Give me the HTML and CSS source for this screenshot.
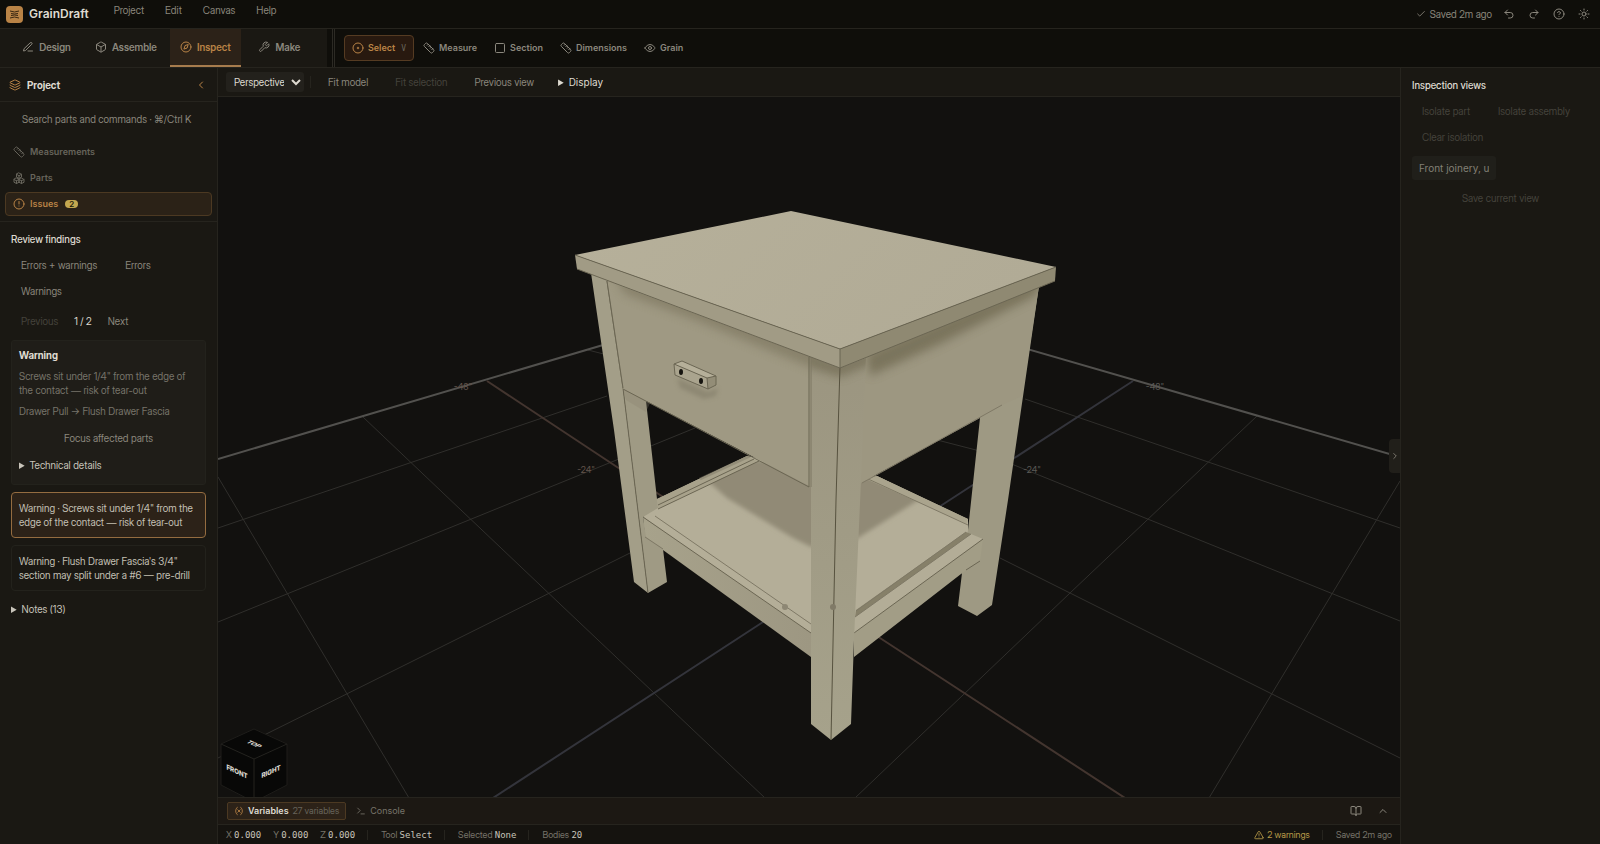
FILE: index.html
```html
<!DOCTYPE html>
<html lang="en">
<head>
<meta charset="utf-8">
<title>GrainDraft</title>
<link rel="stylesheet" href="styles.css">
</head>
<body>
<svg class="sprite" aria-hidden="true">
  <symbol id="i-pen" viewBox="0 0 24 24"><path d="M12 20h9M16.5 3.5a2.1 2.1 0 0 1 3 3L7 19l-4 1 1-4z"/></symbol>
  <symbol id="i-box" viewBox="0 0 24 24"><path d="M21 8v8a2 2 0 0 1-1 1.7l-7 4a2 2 0 0 1-2 0l-7-4A2 2 0 0 1 3 16V8a2 2 0 0 1 1-1.7l7-4a2 2 0 0 1 2 0l7 4A2 2 0 0 1 21 8zM3.3 7L12 12l8.700-5M12 22V12"/></symbol>
  <symbol id="i-compass" viewBox="0 0 24 24"><circle cx="12" cy="12" r="10"/><path d="M16.200 7.800l-2.100 6.300-6.300 2.100 2.100-6.300z"/></symbol>
  <symbol id="i-wrench" viewBox="0 0 24 24"><path d="M14.700 6.300a1 1 0 0 0 0 1.400l1.600 1.600a1 1 0 0 0 1.400 0l3.800-3.800a6 6 0 0 1-7.900 7.900l-6.900 6.900a2.100 2.100 0 0 1-3-3l6.900-6.900a6 6 0 0 1 7.900-7.900z"/></symbol>
  <symbol id="i-target" viewBox="0 0 24 24"><circle cx="12" cy="12" r="10"/><path d="M12 10.500v3M10.500 12h3"/></symbol>
  <symbol id="i-ruler" viewBox="0 0 24 24"><path d="M21.300 15.300a2.400 2.400 0 0 1 0 3.400l-2.600 2.600a2.400 2.400 0 0 1-3.400 0L2.700 8.700a2.400 2.400 0 0 1 0-3.400l2.600-2.600a2.400 2.400 0 0 1 3.400 0zM14.500 12.500l2-2M11.500 9.500l2-2M8.500 6.500l2-2M17.500 15.500l2-2"/></symbol>
  <symbol id="i-square" viewBox="0 0 24 24"><rect x="3" y="3" width="18" height="18" rx="2"/></symbol>
  <symbol id="i-eye" viewBox="0 0 24 24"><path d="M2 12s3.500-7 10-7 10 7 10 7-3.500 7-10 7S2 12 2 12z"/><circle cx="12" cy="12" r="3"/></symbol>
  <symbol id="i-check" viewBox="0 0 24 24"><path d="M20 6L9 17l-5-5"/></symbol>
  <symbol id="i-undo" viewBox="0 0 24 24"><path d="M9 14L4 9l5-5M4 9h10.500a5.500 5.500 0 0 1 0 11H11"/></symbol>
  <symbol id="i-redo" viewBox="0 0 24 24"><path d="M15 14l5-5-5-5M20 9H9.500a5.500 5.500 0 0 0 0 11H13"/></symbol>
  <symbol id="i-help" viewBox="0 0 24 24"><circle cx="12" cy="12" r="10"/><path d="M9.100 9a3 3 0 0 1 5.800 1c0 2-3 3-3 3M12 17h.01"/></symbol>
  <symbol id="i-sun" viewBox="0 0 24 24"><circle cx="12" cy="12" r="4"/><path d="M12 2v2M12 20v2M4.900 4.900l1.400 1.400M17.700 17.700l1.400 1.400M2 12h2M20 12h2M6.300 17.700l-1.400 1.400M19.100 4.900l-1.400 1.400"/></symbol>
  <symbol id="i-layers" viewBox="0 0 24 24"><path d="M12.800 2.200a2 2 0 0 0-1.600 0L2.600 6.100a1 1 0 0 0 0 1.800l8.600 3.900a2 2 0 0 0 1.600 0l8.600-3.900a1 1 0 0 0 0-1.800zM2 12a1 1 0 0 0 .6.900l8.600 3.900a2 2 0 0 0 1.600 0l8.600-3.900A1 1 0 0 0 22 12M2 17a1 1 0 0 0 .6.900l8.600 3.900a2 2 0 0 0 1.600 0l8.600-3.900A1 1 0 0 0 22 17"/></symbol>
  <symbol id="i-left" viewBox="0 0 24 24"><path d="M15 18l-6-6 6-6"/></symbol>
  <symbol id="i-right" viewBox="0 0 24 24"><path d="M9 18l6-6-6-6"/></symbol>
  <symbol id="i-up" viewBox="0 0 24 24"><path d="M18 15l-6-6-6 6"/></symbol>
  <symbol id="i-boxes" viewBox="0 0 24 24"><path d="M7 12l5 3v5.500L7 23l-5-2.500V15zM17 12l5 3v5.500L17 23l-5-2.500V15zM12 2l5 2.500V10l-5 3-5-3V4.500zM7 17.500l5-2.500M7 17.500L2 15M7 17.500V23M17 17.500l5-2.500M17 17.500L12 15M17 17.500V23M12 7.500l5-3M12 7.500l-5-3M12 7.500V13"/></symbol>
  <symbol id="i-alert" viewBox="0 0 24 24"><circle cx="12" cy="12" r="10"/><path d="M12 7v5M12 16h.01"/></symbol>
  <symbol id="i-warn" viewBox="0 0 24 24"><path d="M21.700 18l-8-14a2 2 0 0 0-3.400 0l-8 14A2 2 0 0 0 4 21h16a2 2 0 0 0 1.700-3zM12 9v4M12 17h.01"/></symbol>
  <symbol id="i-var" viewBox="0 0 24 24"><path d="M8 21s-4-3-4-9 4-9 4-9M16 3s4 3 4 9-4 9-4 9M15 9l-6 6M9 9l6 6"/></symbol>
  <symbol id="i-term" viewBox="0 0 24 24"><path d="M4 17l6-6-6-6M12 19h8"/></symbol>
  <symbol id="i-book" viewBox="0 0 24 24"><path d="M12 7v14M3 18a1 1 0 0 1-1-1V4a1 1 0 0 1 1-1h5a4 4 0 0 1 4 4 4 4 0 0 1 4-4h5a1 1 0 0 1 1 1v13a1 1 0 0 1-1 1h-6a3 3 0 0 0-3 3 3 3 0 0 0-3-3z"/></symbol>
</svg>

<div class="app">
  <header class="titlebar">
    <div class="brand">
      <svg class="logo" viewBox="0 0 17 17"><rect width="17" height="17" rx="4" fill="#b98346"/><path d="M4 5q4.500 2 9 0M5 7.500q3.500 1 7 0M5 9.500q3.500-1 7 0M4 12q4.500-2 9 0" fill="none" stroke="#3a2712" stroke-width="1"/></svg>
      <span>GrainDraft</span>
    </div>
    <nav class="menu" aria-label="Main menu">
      <button>Project</button><button>Edit</button><button>Canvas</button><button>Help</button>
    </nav>
    <div class="title-actions">
      <span class="saved"><svg class="icon"><use href="#i-check"/></svg>Saved 2m ago</span>
      <button aria-label="Undo"><svg class="icon md"><use href="#i-undo"/></svg></button>
      <button aria-label="Redo"><svg class="icon md"><use href="#i-redo"/></svg></button>
      <button aria-label="Help"><svg class="icon md"><use href="#i-help"/></svg></button>
      <button aria-label="Theme"><svg class="icon md"><use href="#i-sun"/></svg></button>
    </div>
  </header>

  <div class="modebar">
    <nav class="tabs" aria-label="Workspaces">
      <button class="tab"><svg class="icon md"><use href="#i-pen"/></svg>Design</button>
      <button class="tab"><svg class="icon md"><use href="#i-box"/></svg>Assemble</button>
      <button class="tab active"><svg class="icon md"><use href="#i-compass"/></svg>Inspect</button>
      <button class="tab"><svg class="icon md"><use href="#i-wrench"/></svg>Make</button>
    </nav>
    <div class="tools" role="toolbar" aria-label="Tools">
      <button class="tool active"><svg class="icon md"><use href="#i-target"/></svg>Select<kbd>V</kbd></button>
      <button class="tool"><svg class="icon md"><use href="#i-ruler"/></svg>Measure</button>
      <button class="tool"><svg class="icon md"><use href="#i-square"/></svg>Section</button>
      <button class="tool"><svg class="icon md"><use href="#i-ruler"/></svg>Dimensions</button>
      <button class="tool"><svg class="icon md"><use href="#i-eye"/></svg>Grain</button>
    </div>
  </div>

  <div class="work">
    <aside class="sidebar">
      <header class="side-head">
        <svg class="icon md accent"><use href="#i-layers"/></svg>
        <h2>Project</h2>
        <button aria-label="Collapse panel" class="accent"><svg class="icon md"><use href="#i-left"/></svg></button>
      </header>
      <div class="side-nav">
        <button class="search">Search parts and commands · ⌘/Ctrl K</button>
        <button class="nav-item"><svg class="icon md"><use href="#i-ruler"/></svg>Measurements</button>
        <button class="nav-item"><svg class="icon md"><use href="#i-boxes"/></svg>Parts</button>
        <button class="nav-item active"><svg class="icon md"><use href="#i-alert"/></svg>Issues<span class="badge">2</span></button>
      </div>
      <section class="findings">
        <h3>Review findings</h3>
        <div class="chips">
          <button class="btn">Errors + warnings</button>
          <button class="btn">Errors</button>
          <button class="btn">Warnings</button>
        </div>
        <div class="pager">
          <button class="btn" disabled>Previous</button>
          <span>1 / 2</span>
          <button class="btn">Next</button>
        </div>
        <article class="card">
          <h4>Warning</h4>
          <p>Screws sit under 1/4" from the edge of the contact — risk of tear-out</p>
          <p>Drawer Pull → Flush Drawer Fascia</p>
          <button class="btn">Focus affected parts</button>
          <details><summary>Technical details</summary></details>
        </article>
        <button class="finding selected">Warning · Screws sit under 1/4" from the edge of the contact — risk of tear-out</button>
        <button class="finding">Warning · Flush Drawer Fascia's 3/4" section may split under a #6 — pre-drill</button>
        <details class="notes"><summary>Notes (13)</summary></details>
      </section>
    </aside>

    <main class="center">
      <div class="viewbar">
        <select aria-label="Projection"><option>Perspective</option></select>
        <span class="sep"></span>
        <button class="btn">Fit model</button>
        <button class="btn" disabled>Fit selection</button>
        <button class="btn">Previous view</button>
        <details><summary>Display</summary></details>
      </div>

      <div class="canvas">
        <svg class="scene" viewBox="218 97 1182 700" preserveAspectRatio="xMidYMid slice" role="img" aria-label="Nightstand model">
          <defs>
            <filter id="soft" x="-20%" y="-50%" width="140%" height="200%"><feGaussianBlur stdDeviation="5"/></filter>
            <filter id="soft2" x="-20%" y="-20%" width="140%" height="140%"><feGaussianBlur stdDeviation="2"/></filter>
            <linearGradient id="legG" x1="0" y1="0" x2="0" y2="1"><stop offset="0" stop-color="#9b9580"/><stop offset="1" stop-color="#a6a28b"/></linearGradient>
            <linearGradient id="topG" x1="0" y1="0" x2="1" y2="0.300"><stop offset="0" stop-color="#b6b09a"/><stop offset="1" stop-color="#b1ab96"/></linearGradient>
            <linearGradient id="sideG" x1="0" y1="0" x2="1" y2="0"><stop offset="0" stop-color="#a7a28b"/><stop offset="1" stop-color="#9d9782"/></linearGradient>
            <clipPath id="cDrawer"><path d="M607 281L811 357V487L623 389z"/></clipPath>
            <clipPath id="cRight"><path d="M840 366L1039 286L1022 396L862 483L840 470z"/></clipPath>
            <clipPath id="cShelf"><path d="M643 517L658 508L758 461L877 476L968 521V532L856 611L811 633z"/></clipPath>
            <clipPath id="cLeg"><path d="M811 357L840 368L866 358L851 724L831 740L811 724z"/></clipPath>
          </defs>
          <g class="grid">
            <path d="M218 477L409 798M363 417L560 604L765 798M588 350L976 450M976 450L1014 465L1400 621M1025 399L1400 528M1000 558L1400 758"/>
            <path d="M218 528L607 396M218 622L560 483L695 428M218 758L630 553M1400 481L1209 798M1257 416L1070 593L855 798"/>
          </g>
          <path class="horizon" d="M218 459L620 340M1010 344L1400 457"/>
          <path class="axis-x" d="M487 381L617 467L880 638L1125 798"/>
          <path class="axis-y" d="M1133 381L942 505L763 622L493 798"/>
          <g class="marks" text-anchor="middle">
            <text x="463" y="390" class="warm">-48"</text><text x="586" y="473" class="warm">-24"</text>
            <text x="1155" y="390">-48"</text><text x="1032" y="473">-24"</text>
          </g>

          <path d="M657 499L747 456L830 470L877 476L968 519V536L983 539L854 640H811L643 517z" fill="#b4ae98"/>
          <g clip-path="url(#cShelf)"><path d="M700 474L727 498L760 518L793 538L811 547L858 538L920 499L900 460H740z" fill="#918a76" filter="url(#soft2)"/></g>
          <path d="M657 499L747 456L758 461L658 509z" fill="#a8a28b"/>
          <path d="M658 505L754 459M658 509L759 461" class="edge"/>
          <path d="M700 479L750 456" stroke="#827c69" stroke-width="3" opacity=".5"/>
          <path d="M866 479L877 476L968 519L967 524z" fill="#aaa48d"/>
          <path d="M866 478L968 525" class="edge faint"/>
          <path d="M655 516L811 624" class="edge faint"/>
          <path d="M643 517L811 633V657L645 537z" fill="url(#sideG)"/>
          <path d="M643 517L811 633" class="edge"/>

          <path d="M591 273L607 280L623 388L648 593L634 582L614 430z" fill="#a39e88"/>
          <path d="M607 280L620 285L646 401L658 508L643 517L646 537L663 549L667 582L648 593L623 388z" fill="#9f9a84"/>
          <path d="M607 281L623 388L648 593" class="edge"/>
          <path d="M645 537L663 549" class="edge faint"/>
          <path d="M1039 286L1008 500L992 605L977 616L958 606L962 573L968 530L980 418L990 380z" fill="#9e9983"/>
          <path d="M854 633L983 539L980 561L961 574L854 657z" fill="#a29d86"/>
          <path d="M971 534L983 539L854 633L855 617z" fill="#b3ad97"/>
          <path d="M966 532L971 534L855 617L856 610z" fill="#868069"/>
          <path d="M966 532L856 611M971 534L855 617" class="edge faint"/>
          <path d="M854 633L983 539M980 561L966 570" class="edge"/>

          <path d="M607 280L811 356V487L623 389z" fill="#9f9983"/>
          <path d="M623 389L650 403L646 412L626 400z" fill="#88826d" opacity=".3"/>
          <path d="M840 366L1039 286L1022 396L1002 405L980 418L861 483z" fill="#9d9781"/>
          <g clip-path="url(#cDrawer)"><path d="M612 272L830 352V375L770 351L700 322L625 294z" fill="#7d765f" opacity=".65" filter="url(#soft)"/></g>
          <g clip-path="url(#cRight)"><path d="M866 354L1045 276L1035 296L940 344L870 376z" fill="#6f6951" opacity=".75" filter="url(#soft)"/></g>
          <path d="M623 389L809 487V357M607 281L623 388" class="edge"/>
          <path d="M862 483L1002 405" class="edge faint"/>
          <path d="M811 355L840 366L866 357L861 480L854 640L851 724L831 740L811 724z" fill="url(#legG)"/>
          <g clip-path="url(#cLeg)"><path d="M805 350L840 363L872 350V364L840 377L805 366z" fill="#6f6951" opacity=".7" filter="url(#soft)"/></g>
          <path d="M840 366L836 500L831 740" class="edge dark"/>
          <path d="M811 357V487" stroke="#7c7662" stroke-width="1"/>

          <path d="M791 211L1056 267L840 349L575 255z" fill="url(#topG)"/>
          <path d="M575 255L840 349V368L577 269z" fill="#a19b85"/>
          <path d="M840 349L1056 267L1055 281L840 368z" fill="#8f8972"/>
          <path d="M575 255L840 349L1056 267M840 349V368M577 269L840 368L1055 281" class="edge"/>

          <path d="M677 378L708 392L718 388L716 396L704 399L680 388z" fill="#7d7763" opacity=".5" filter="url(#soft2)"/>
          <path d="M674 364L682 361L716 376L707 378z" fill="#b5af99"/>
          <path d="M674 364L707 378L708 389L675 375z" fill="#aaa48e"/>
          <path d="M707 378L716 376V385L708 389z" fill="#938d77"/>
          <path d="M674 364L682 361L716 376V385L708 389L675 375zM674 364L707 378L716 376M707 378L708 389" class="edge"/>
          <ellipse cx="681" cy="372" rx="2" ry="3" fill="#16140f"/><ellipse cx="701" cy="381" rx="2" ry="3" fill="#16140f"/>
          <circle cx="785" cy="607" r="3" fill="#8d8774"/><circle cx="833" cy="607" r="3" fill="#807a67"/>
        </svg>
        <svg class="cube" viewBox="0 0 68 70" role="img" aria-label="View cube">
          <path d="M34 2L67 17V58L34 75L1 58V17z" fill="#080807" stroke="#1e1d1a"/>
          <path d="M1 17L34 32L67 17M34 32V75" fill="none" stroke="#24231f"/>
          <g class="cube-text" text-anchor="middle">
            <text transform="matrix(.9 .41 -.9 .41 32 18)">TOP</text>
            <text transform="matrix(.9 .41 0 1 17 47)">FRONT</text>
            <text transform="matrix(.9 -.41 0 1 51 47)">RIGHT</text>
          </g>
        </svg>
        <button class="drawer-handle" aria-label="Toggle inspector"><svg class="icon"><use href="#i-right"/></svg></button>
      </div>

      <div class="dock">
        <button class="dock-tab active"><svg class="icon accent"><use href="#i-var"/></svg>Variables<small>27 variables</small></button>
        <button class="dock-tab"><svg class="icon"><use href="#i-term"/></svg>Console</button>
        <span class="grow"></span>
        <button aria-label="Open reference"><svg class="icon md"><use href="#i-book"/></svg></button>
        <button aria-label="Expand dock"><svg class="icon md"><use href="#i-up"/></svg></button>
      </div>
      <footer class="status">
        <span>X <b>0.000</b></span><span>Y <b>0.000</b></span><span>Z <b>0.000</b></span>
        <span class="item">Tool <b>Select</b></span>
        <span class="item">Selected <b>None</b></span>
        <span class="item">Bodies <b>20</b></span>
        <span class="grow"></span>
        <span class="warn"><svg class="icon"><use href="#i-warn"/></svg>2 warnings</span>
        <span class="item">Saved 2m ago</span>
      </footer>
    </main>

    <aside class="inspector">
      <h3>Inspection views</h3>
      <div class="chips">
        <button class="btn" disabled>Isolate part</button>
        <button class="btn" disabled>Isolate assembly</button>
        <button class="btn" disabled>Clear isolation</button>
      </div>
      <input type="text" aria-label="View name" placeholder="Front joinery, u">
      <button class="btn" disabled>Save current view</button>
    </aside>
  </div>
</div>
</body>
</html>
```
FILE: styles.css
```css
:root {
  --ink: #dedad0;
  --muted: #8b877d;
  --dim: #67645b;
  --accent: #b98346;
  --panel: #1a1813;
  --bg: #0f0e0a;
  --line: #26241e;
  --ui: Inter, "Noto Sans", sans-serif;
  --display: "Inter Display", Inter, "Noto Sans", sans-serif;
  color-scheme: dark;
}
* { box-sizing: border-box; }
body {
  margin: 0;
  background: var(--bg);
  color: var(--ink);
  font: 10px/14px var(--display);
}
button {
  display: inline-flex;
  align-items: center;
  margin: 0;
  padding: 0;
  border: 0;
  background: none;
  color: var(--muted);
  font: inherit;
}
h2, h3, h4, p { margin: 0; font-size: 10px; }
h3 { font-weight: 500; }
summary { cursor: default; }
.sprite { position: absolute; width: 0; height: 0; }
.icon {
  flex: none;
  width: 10px;
  height: 10px;
  fill: none;
  stroke: currentColor;
  stroke-width: 2;
  stroke-linecap: round;
  stroke-linejoin: round;
}
.icon.md { width: 12px; height: 12px; }
.accent { color: var(--accent); }
.grow { flex: 1; }

.app {
  display: grid;
  grid-template-rows: auto auto minmax(0, 1fr);
  height: 100vh;
}

.titlebar {
  display: flex;
  height: 29px;
  padding: 0 8px 0 6px;
  border-bottom: 1px solid var(--line);
}
.brand { display: flex; align-items: center; gap: 6px; font: 600 12px/14px var(--ui); }
.logo { width: 17px; height: 17px; }
.menu { display: flex; align-items: flex-start; gap: 21px; margin-left: 25px; padding-top: 3px; }
.title-actions { display: flex; align-items: center; gap: 9px; margin-left: auto; color: var(--muted); }
.title-actions button { justify-content: center; width: 16px; }
.saved { display: flex; align-items: center; gap: 4px; }

.modebar { display: flex; height: 39px; border-bottom: 1px solid var(--line); }
.tabs { display: flex; gap: 3px; padding: 0 12px 0 11px; background: var(--panel); }
.tab {
  justify-content: center;
  gap: 5px;
  min-width: 71px;
  padding: 0 10px;
  border-bottom: 2px solid transparent;
  font-weight: 600;
}
.tab.active { padding: 0 9px; background: #2c2218; border-color: #a77c4d; color: var(--accent); }
.tools {
  display: flex;
  flex: 1;
  align-items: center;
  gap: 1px;
  margin-left: 5px;
  padding-left: 9px;
  border-left: 3px double #2c2a24;
}
.tool {
  gap: 4px;
  height: 26px;
  padding: 0 7px;
  border: 1px solid transparent;
  border-radius: 4px;
  font-family: var(--ui);
  font-size: 9px;
  font-weight: 600;
}
.tool.active { background: #28190f; border-color: #553b22; color: var(--accent); }
kbd { margin-left: 2px; color: var(--dim); font: 8px "DejaVu Sans Mono", monospace; }

.work { display: grid; grid-template-columns: 218px minmax(0, 1fr) 200px; min-height: 0; }
.sidebar { background: var(--panel); border-right: 1px solid var(--line); }
.side-head {
  display: flex;
  align-items: center;
  gap: 6px;
  height: 34px;
  padding: 0 10px 0 9px;
  border-bottom: 1px solid var(--line);
}
.side-head button { margin-left: auto; }
.side-nav {
  display: flex;
  flex-direction: column;
  gap: 2px;
  padding: 5px;
  border-bottom: 1px solid var(--line);
}
.search { height: 24px; margin-bottom: 7px; padding: 0 17px; white-space: nowrap; }
.nav-item {
  gap: 5px;
  height: 24px;
  padding: 0 7px;
  border: 1px solid transparent;
  border-radius: 4px;
  color: var(--dim);
  font-family: var(--ui);
  font-size: 9px;
  font-weight: 600;
}
.nav-item.active { background: #2b2217; border-color: #4c3922; color: var(--accent); }
.badge {
  margin-left: 2px;
  padding: 0 4px;
  border-radius: 4px;
  background: #c4a850;
  color: #221a08;
  font-size: 8px;
  line-height: 8px;
}
.findings { display: flex; flex-direction: column; padding: 10px 11px; }
.btn { justify-content: center; height: 22px; padding: 0 10px; white-space: nowrap; }
.btn:disabled { color: #45433c; }
.chips { display: flex; flex-wrap: wrap; gap: 4px 8px; margin-top: 8px; }
.pager { display: flex; align-items: center; gap: 6px; margin: 8px 0; }
.card {
  display: flex;
  flex-direction: column;
  padding: 7px 7px 12px;
  border: 1px solid #23221c;
  border-radius: 3px;
  background: #1f1d18;
}
.card p { margin-top: 7px; color: #77746a; }
.card h4 { color: var(--ink); font-weight: 700; }
.card .btn { margin: 9px 0; }
.card summary { color: #c8c4ba; }
.finding {
  margin-top: 7px;
  padding: 8px 7px;
  border: 1px solid #23221c;
  border-radius: 4px;
  color: #c4c0b5;
  text-align: left;
}
.finding.selected { background: #2c2218; border-color: #946c40; }
.notes { margin-top: 11px; color: #c8c4ba; }

.center { display: flex; flex-direction: column; min-width: 0; min-height: 0; }
.viewbar {
  display: flex;
  align-items: center;
  height: 29px;
  padding: 0 8px;
  border-bottom: 1px solid var(--line);
  background: var(--panel);
}
.viewbar select {
  width: 78px;
  height: 20px;
  padding: 0 4px;
  border: 0;
  border-radius: 3px;
  background: #23211c;
  color: var(--ink);
  font: inherit;
}
.sep { width: 1px; height: 12px; margin: 0 7px 0 6px; background: var(--line); }
.viewbar .btn { margin-right: 7px; }
.viewbar details { margin-left: 7px; font-family: var(--ui); }
.canvas { position: relative; flex: 1; min-height: 0; overflow: hidden; background: #12110f; }
.scene { display: block; width: 100%; height: 100%; }
.grid { fill: none; stroke: #302f2c; }
.horizon { fill: none; stroke: #52514e; stroke-width: 2; }
.axis-x { fill: none; stroke: #43352f; stroke-width: 2; }
.axis-y { fill: none; stroke: #33343b; stroke-width: 2; }
.marks { fill: #5c5b57; font-size: 9px; }
.marks .warm { fill: #64554c; }
.edge { fill: none; stroke: #6b6653; stroke-width: 1; }
.edge.faint { stroke: #7f7966; }
.edge.dark { stroke: #57523f; }
.cube { position: absolute; left: 2px; bottom: 0; width: 68px; height: 70px; }
.cube-text { fill: #d8d5cc; font-size: 7px; font-weight: 800; }
.drawer-handle {
  position: absolute;
  right: 0;
  top: 342px;
  justify-content: center;
  width: 11px;
  height: 34px;
  border-radius: 4px 0 0 4px;
  background: #211f1a;
}
.dock {
  display: flex;
  align-items: center;
  gap: 3px;
  height: 27px;
  padding: 0 5px 0 9px;
  border-top: 1px solid var(--line);
  background: #1c1813;
}
.dock > button[aria-label] { justify-content: center; width: 24px; }
.dock-tab {
  gap: 4px;
  height: 18px;
  padding: 0 6px;
  border: 1px solid transparent;
  border-radius: 2px;
  color: #77746a;
  font-family: var(--ui);
  font-size: 9px;
}
.dock-tab.active { background: #2c2218; border-color: #4c3922; color: var(--ink); font-weight: 600; }
small { color: var(--dim); font: 400 9px/14px var(--display); }
.status {
  display: flex;
  align-items: center;
  gap: 12px;
  height: 20px;
  padding: 0 8px;
  border-top: 1px solid var(--line);
  background: #15130f;
  color: #77746a;
  font-size: 9px;
}
.status b { color: #c8c4ba; font: 9px/10px "DejaVu Sans Mono", monospace; }
.item { padding-left: 13px; border-left: 1px solid var(--line); line-height: 10px; }
.warn { display: flex; align-items: center; gap: 3px; color: #b89a48; }

.inspector {
  display: flex;
  flex-direction: column;
  padding: 10px 11px;
  border-left: 1px solid var(--line);
  background: var(--panel);
}
.inspector input {
  width: 84px;
  height: 24px;
  margin: 8px 0 7px;
  padding: 0 7px;
  border: 0;
  border-radius: 3px;
  background: #201f1a;
  font: 10px/14px var(--ui);
}
.inspector input::placeholder { color: #827f75; }
```
